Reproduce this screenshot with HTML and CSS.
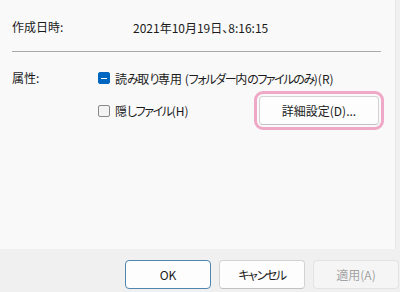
FILE: index.html
```html
<!DOCTYPE html>
<html lang="ja">
<head>
<meta charset="utf-8">
<link rel="stylesheet" href="styles.css">
</head>
<body>
<div class="dialog">
  <div class="panel">
    <div class="row row-date">
      <span class="label">作成日時:</span>
      <span class="value">2021年10月19日、8:16:15</span>
    </div>
    <div class="sep"></div>
    <div class="row row-attr1">
      <span class="label label-attr">属性:</span>
      <span class="check checked"><span class="dash"></span></span>
      <span class="check-text">読<span class="kana">み</span>取<span class="kana">り</span>専用 (<span class="kana">フォルダー</span>内<span class="kana">のファイルのみ</span>)(R)</span>
    </div>
    <div class="row row-attr2">
      <span class="label label-attr"></span>
      <span class="check"></span>
      <span class="check-text">隠<span class="kana">しファイル</span>(H)</span>
      <button class="btn btn-adv">詳細設定(D)...</button>
    </div>
  </div>
  <div class="footer">
    <button class="btn btn-foot btn-default">OK</button>
    <button class="btn btn-foot"><span class="kana">キャンセル</span></button>
    <button class="btn btn-foot btn-disabled">適用(A)</button>
  </div>
</div>
</body>
</html>
```
FILE: styles.css
```css
html, body {
  margin: 0;
  padding: 0;
}
body {
  width: 400px;
  height: 292px;
  overflow: hidden;
  background: #f0f0f0;
  font-family: "Noto Sans CJK JP", "Noto Sans", sans-serif;
  font-size: 12px;
  color: #1b1b1b;
  font-feature-settings: "palt";
}
.dialog {
  display: flex;
  flex-direction: column;
  height: 292px;
}
.panel {
  box-sizing: border-box;
  width: 396px;
  height: 249px;
  background: #f9f9f9;
  border-right: 1px solid #e6e6e6;
  padding: 16px 14px 0 12px;
  display: flex;
  flex-direction: column;
}
.row {
  display: flex;
  align-items: center;
}
.row-date {
  height: 22px;
}
.label {
  width: 121px;
  flex: none;
  line-height: 22px;
}
.label-attr {
  width: 86px;
}
.sep {
  height: 1px;
  background: #a9a9a9;
  margin-top: 13px;
}
.row-attr1 {
  margin-top: 15px;
  height: 22px;
}
.row-attr2 {
  margin-top: 7px;
  height: 29px;
}
.check {
  box-sizing: border-box;
  width: 12px;
  height: 12px;
  border-radius: 2px;
  border: 1px solid #8a8a8a;
  background: #f3f3f3;
  flex: none;
  margin-right: 5px;
  display: flex;
  align-items: center;
  justify-content: center;
}
.check.checked {
  background: #0067c0;
  border-color: #0067c0;
}
.dash {
  width: 6px;
  height: 1px;
  background: #ffffff;
}
.check-text {
  white-space: nowrap;
}
.kana {
  letter-spacing: -1.4px;
}
.btn {
  box-sizing: border-box;
  font-family: inherit;
  font-size: 12px;
  font-feature-settings: "palt";
  color: #1b1b1b;
  background: #fdfdfd;
  border: 1px solid #d3d3d3;
  border-bottom-color: #c2c2c2;
  border-radius: 4px;
  padding: 0;
  height: 29px;
}
.btn-adv {
  margin-left: auto;
  margin-right: 2px;
  width: 120px;
  outline: 3px solid #efa8c6;
  outline-offset: 2px;
}
.footer {
  display: flex;
  justify-content: flex-end;
  gap: 8px;
  padding: 11px 1px 0 0;
}
.btn-foot {
  width: 86px;
}
.btn-default {
  border: 1px solid #4f87b3;
}
.btn-disabled {
  background: #f5f5f5;
  border-color: #e3e3e3;
  color: #a3a3a3;
}
```
